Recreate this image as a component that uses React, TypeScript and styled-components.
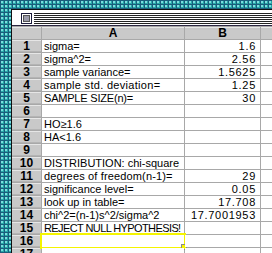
import React from "react";
import styled, { createGlobalStyle } from "styled-components";

const Global = createGlobalStyle`
  html, body { margin: 0; padding: 0; }
  body { width: 272px; height: 253px; overflow: hidden; }
`;

const Desktop = styled.div`
  width: 272px;
  height: 253px;
  overflow: hidden;
  box-sizing: border-box;
  padding: 9px 0 0 11px;
  background-color: #27a7a7;
  background-image:
    radial-gradient(circle at 2px 2px, #7fe0e0 0.7px, transparent 0.9px),
    linear-gradient(#1b5c7c 1px, transparent 1px),
    linear-gradient(90deg, #1b5c7c 1px, transparent 1px);
  background-size: 4px 4px;
`;

const Window = styled.div`
  height: 100%;
  border-left: 1px solid #111;
  border-top: 1px solid #111;
  background: #fff;
  overflow: hidden;
  display: flex;
  flex-direction: column;
`;

const TitleBar = styled.div`
  height: 16px;
  flex: none;
  display: flex;
  align-items: flex-start;
  padding: 3px 0 0 9px;
  box-sizing: border-box;
  border-bottom: 1px solid #2a2540;
  background: #fff;
`;

const CloseBox = styled.div`
  width: 11px;
  height: 11px;
  box-sizing: border-box;
  border: 1px solid #1a1a3a;
  background: #fff;
  padding: 1px;
  flex: none;
`;

const CloseInner = styled.div`
  width: 100%;
  height: 100%;
  box-sizing: border-box;
  border: 1px solid #555;
  background: #9a9aaa;
`;

const Stripes = styled.div`
  flex: 1;
  height: 11px;
  margin-left: 2px;
  background: repeating-linear-gradient(#222 0 1px, #fff 1px 2px);
`;

const Grid = styled.div`
  flex: 1;
  display: grid;
  grid-template-columns: 29px 142px 75px 1fr;
  grid-auto-rows: 12px;
  gap: 1px;
  background: #a8a8a8;
  padding-top: 1px;
  font-family: "Liberation Sans", Arial, sans-serif;
  font-size: 11px;
  color: #000;
`;

const HeadCell = styled.div`
  background: #c9c9c9;
  background-image: linear-gradient(#e6e6e6 1px, transparent 1px);
  font-weight: bold;
  font-size: 12px;
  line-height: 12px;
  text-align: center;
  overflow: hidden;
`;

const RowHead = styled(HeadCell)`
  box-shadow: inset 0 -1px 0 #b4b4b4;
`;

const Cell = styled.div<{ $num?: boolean; $track?: number }>`
  background: #fff;
  line-height: 12px;
  white-space: nowrap;
  overflow: visible;
  position: relative;
  padding: ${(p) => (p.$num ? "0 4px 0 0" : "0 0 0 2px")};
  text-align: ${(p) => (p.$num ? "right" : "left")};
  letter-spacing: ${(p) => (p.$num ? "0.7px" : `${p.$track ?? 0}px`)};
`;

const Selection = styled.div`
  position: absolute;
  left: -2px;
  top: -2px;
  right: -2px;
  bottom: -2px;
  border: 2px solid #f4f400;
  pointer-events: none;
`;

const Handle = styled.div`
  position: absolute;
  right: -3px;
  bottom: -3px;
  width: 4px;
  height: 4px;
  background: #f4f400;
  border: 1px solid #8a8a8a;
`;

const rows: [string, string, number][] = [
  ["sigma=", "1.6", 0],
  ["sigma^2=", "2.56", 0],
  ["sample variance=", "1.5625", 0],
  ["sample std. deviation=", "1.25", 0.3],
  ["SAMPLE SIZE(n)=", "30", -0.2],
  ["", "", 0],
  ["HO≥1.6", "", 0],
  ["HA<1.6", "", 0],
  ["", "", 0],
  ["DISTRIBUTION: chi-square", "", 0],
  ["degrees of freedom(n-1)=", "29", 0.15],
  ["significance level=", "0.05", 0],
  ["look up in table=", "17.708", 0],
  ["chi^2=(n-1)s^2/sigma^2", "17.7001953", 0],
  ["REJECT NULL HYPOTHESIS!", "", -0.6],
  ["", "", 0],
  ["", "", 0],
];

export default function App() {
  return (
    <>
      <Global />
      <Desktop>
        <Window>
          <TitleBar>
            <CloseBox>
              <CloseInner />
            </CloseBox>
            <Stripes />
          </TitleBar>
          <Grid>
            <HeadCell />
            <HeadCell>A</HeadCell>
            <HeadCell>B</HeadCell>
            <HeadCell />
            {rows.map(([a, b, t], i) => (
              <React.Fragment key={i}>
                <RowHead>{i + 1}</RowHead>
                <Cell $track={t}>
                  {a}
                  {i === 15 && (
                    <Selection>
                      <Handle />
                    </Selection>
                  )}
                </Cell>
                <Cell $num>{b}</Cell>
                <Cell />
              </React.Fragment>
            ))}
          </Grid>
        </Window>
      </Desktop>
    </>
  );
}
